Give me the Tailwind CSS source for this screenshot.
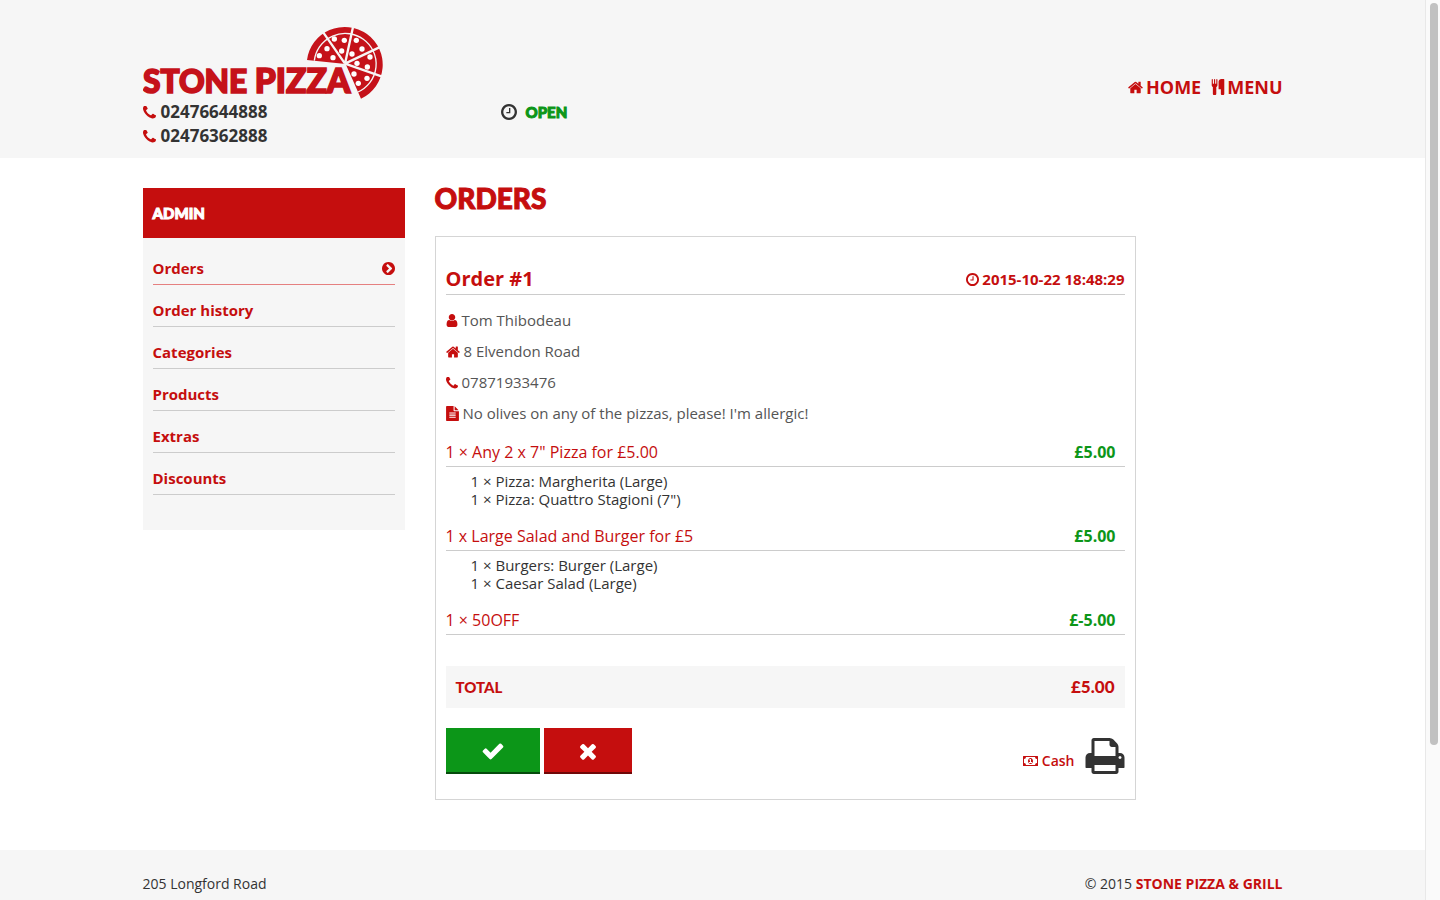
<!DOCTYPE html>
<html lang="en">
<head>
<meta charset="utf-8">
<meta name="viewport" content="width=device-width, initial-scale=1">
<title>Orders - Stone Pizza</title>
<script src="https://cdn.jsdelivr.net/npm/@tailwindcss/browser@4"></script>
</head>
<body class="flex h-screen overflow-hidden bg-white font-['Open_Sans','Noto_Sans',sans-serif] text-[15px] text-[#333]">

<svg class="hidden" aria-hidden="true">
  <symbol id="phone" viewBox="192 192 1408 1408"><path d="M1600 1240q0 27-10 70.5t-21 68.5q-21 50-122 106-94 51-186 51-27 0-53-3.5t-57.5-12.5-47-14.5-55.5-20.5-49-18q-98-35-175-83-127-79-264-216t-216-264q-48-77-83-175-3-9-18-49t-20.5-55.5-14.5-47-12.5-57.5-3.5-53q0-92 51-186 56-101 106-122 25-11 68.5-21t70.5-10q14 0 21 3 18 6 53 76 11 19 30 54t35 63.5 31 53.5q3 4 17.5 25t21.5 35.5 7 28.5q0 20-28.5 50t-62 55-62 53-28.5 46q0 9 5 22.5t8.5 20.5 14 24 11.5 19q76 137 174 235t235 174q2 1 19 11.5t24 14 20.5 8.5 22.5 5q18 0 46-28.5t53-62 55-62 50-28.5q14 0 28.5 7t35.5 21.5 25 17.5q25 15 53.5 31t63.5 35 54 30q70 35 76 53 3 7 3 21z"/></symbol>
  <symbol id="home" viewBox="64 64 1664 1664"><path d="M1472 992v480q0 26-19 45t-45 19h-384v-384h-256v384h-384q-26 0-45-19t-19-45v-480q0-1 .5-3t.5-3l575-474 575 474q1 2 1 6zm223-69l-62 74q-8 9-21 11h-3q-13 0-21-7l-692-577-692 577q-12 8-24 7-13-2-21-11l-62-74q-8-10-7-23.500t11-21.500l719-599q32-26 76-26t76 26l244 204v-195q0-14 9-23t23-9h192q14 0 23 9t9 23v408l219 182q10 8 11 21.500t-7 23.500z"/></symbol>
  <symbol id="clock" viewBox="128 128 1536 1536"><path d="M1024 544v448q0 14-9 23t-23 9h-320q-14 0-23-9t-9-23v-64q0-14 9-23t23-9h224v-352q0-14 9-23t23-9h64q14 0 23 9t9 23zm416 352q0-148-73-273t-198-198-273-73-273 73-198 198-73 273 73 273 198 198 273 73 273-73 198-198 73-273zm224 0q0 209-103 385.5t-279.5 279.500-385.500 103-385.500-103-279.500-279.500-103-385.500 103-385.500 279.500-279.500 385.500-103 385.500 103 279.500 279.500 103 385.500z"/></symbol>
  <symbol id="cutlery" viewBox="192 0 1408 1792"><path d="M832 64v640q0 61-35.5 111t-92.5 70v779q0 52-38 90t-90 38h-128q-52 0-90-38t-38-90v-779q-57-20-92.5-70t-35.5-111v-640q0-26 19-45t45-19 45 19 19 45v416q0 26 19 45t45 19 45-19 19-45v-416q0-26 19-45t45-19 45 19 19 45v416q0 26 19 45t45 19 45-19 19-45v-416q0-26 19-45t45-19 45 19 19 45zm768 0v1600q0 52-38 90t-90 38h-128q-52 0-90-38t-38-90v-512h-224q-13 0-22.5-9.5t-9.5-22.5v-800q0-132 94-226t226-94h256q26 0 45 19t19 45z"/></symbol>
  <symbol id="arrow" viewBox="128 128 1536 1536"><path d="M845 1395l454-454q19-19 19-45t-19-45l-454-454q-19-19-45-19t-45 19l-102 102q-19 19-19 45t19 45l307 307-307 307q-19 19-19 45t19 45l102 102q19 19 45 19t45-19zm819-499q0 209-103 385.500t-279.500 279.500-385.500 103-385.500-103-279.500-279.500-103-385.500 103-385.500 279.500-279.500 385.500-103 385.500 103 279.500 279.500 103 385.500z" fill-rule="evenodd"/></symbol>
  <symbol id="user" viewBox="256 128 1280 1536"><path d="M1536 1399q0 109-62.500 187t-150.500 78h-854q-88 0-150.500-78t-62.500-187q0-85 8.500-160.500t31.500-152 58.500-131 94-89 134.500-34.500q131 128 313 128t313-128q76 0 134.500 34.500t94 89 58.500 131 31.500 152 8.500 160.500zm-256-887q0 159-112.500 271.500t-271.500 112.500-271.500-112.500-112.500-271.500 112.500-271.500 271.500-112.500 271.500 112.500 112.500 271.500z"/></symbol>
  <symbol id="note" viewBox="128 0 1536 1792"><path d="M1596 476q14 14 28 36h-472v-472q22 14 36 28zm-476 164h544v1056q0 40-28 68t-68 28h-1344q-40 0-68-28t-28-68v-1600q0-40 28-68t68-28h800v544q0 40 28 68t68 28zm160 736v-64q0-14-9-23t-23-9h-704q-14 0-23 9t-9 23v64q0 14 9 23t23 9h704q14 0 23-9t9-23zm0-256v-64q0-14-9-23t-23-9h-704q-14 0-23 9t-9 23v64q0 14 9 23t23 9h704q14 0 23-9t9-23zm0-256v-64q0-14-9-23t-23-9h-704q-14 0-23 9t-9 23v64q0 14 9 23t23 9h704q14 0 23-9t9-23z" fill-rule="evenodd"/></symbol>
  <symbol id="check" viewBox="0 0 1792 1792"><path d="M1671 566q0 40-28 68l-724 724-136 136q-28 28-68 28t-68-28l-136-136-362-362q-28-28-28-68t28-68l136-136q28-28 68-28t68 28l294 295 656-657q28-28 68-28t68 28l136 136q28 28 28 68z"/></symbol>
  <symbol id="times" viewBox="0 0 1792 1792"><path d="M1490 1322q0 40-28 68l-136 136q-28 28-68 28t-68-28l-294-294-294 294q-28 28-68 28t-68-28l-136-136q-28-28-28-68t28-68l294-294-294-294q-28-28-28-68t28-68l136-136q28-28 68-28t68 28l294 294 294-294q28-28 68-28t68 28l136 136q28 28 28 68t-28 68l-294 294 294 294q28 28 28 68z"/></symbol>
  <symbol id="print" viewBox="64 128 1664 1536"><path d="M448 1536h896v-256h-896v256zm0-640h896v-384h-160q-40 0-68-28t-28-68v-160h-640v640zm1152 64q0-26-19-45t-45-19-45 19-19 45 19 45 45 19 45-19 19-45zm128 0v416q0 13-9.500 22.500t-22.500 9.500h-224v160q0 40-28 68t-68 28h-960q-40 0-68-28t-28-68v-160h-224q-13 0-22.500-9.500t-9.500-22.500v-416q0-79 56.500-135.500t135.500-56.500h64v-544q0-40 28-68t68-28h672q40 0 88 20t76 48l152 152q28 28 48 76t20 88v256h64q79 0 135.500 56.500t56.500 135.500z"/></symbol>
  <symbol id="money" viewBox="0 0 30 20"><path fill-rule="evenodd" d="M1 0h28a1 1 0 0 1 1 1v18a1 1 0 0 1-1 1H1a1 1 0 0 1-1-1V1a1 1 0 0 1 1-1zM6 2a4 4 0 0 1-4 4v8a4 4 0 0 1 4 4h18a4 4 0 0 1 4-4V6a4 4 0 0 1-4-4z"/><path fill-rule="evenodd" d="M15 4c3 0 5 3 5 6s-2 6-5 6-5-3-5-6 2-6 5-6zM12 8l1 1 1-.6V12h-2v2h6v-2h-2V6h-2z"/></symbol>
</svg>

<div class="flex min-w-0 flex-1 flex-col">
  <header class="shrink-0 bg-[#f6f6f6]">
    <div class="mx-auto flex h-[158px] max-w-[1140px] justify-between pt-6">
      <div class="flex">
        <div class="w-[358px]">
          <a href="#" class="block" aria-label="Stone Pizza home">
            <svg class="h-[76px] w-[243px] fill-[#c5121a]" viewBox="24 28 729 228">
              <g font-family="Lato, sans-serif" font-weight="900" stroke="#c5121a" stroke-width="5">
                <text x="24" y="236" font-size="95">STONE</text>
                <text x="359" y="236" font-size="101">PIZZA</text>
              </g>
              <path d="M632 134L640 130L700 256L678 256z" fill="#f6f6f6"/>
              <path d="M632 148L516 136A114 113 0 1 1 678 252z"/>
              <path d="M538 138A93 92 0 1 1 669 232" fill="none" stroke="#f6f6f6" stroke-width="4"/>
              <path d="M630 147L563 51M630 147L656 28M630 147L744 93M630 147L750 189" fill="none" stroke="#f6f6f6" stroke-width="7"/>
              <g fill="#fff"><circle cx="553" cy="123" r="8"/><circle cx="576" cy="102" r="8"/><circle cx="594" cy="129" r="8"/><circle cx="598" cy="73" r="8"/><circle cx="628" cy="77" r="8"/><circle cx="620" cy="109" r="8"/><circle cx="664" cy="77" r="8"/><circle cx="681" cy="103" r="8"/><circle cx="651" cy="118" r="8"/><circle cx="705" cy="127" r="8"/><circle cx="697" cy="157" r="8"/><circle cx="666" cy="146" r="8"/><circle cx="657" cy="178" r="8"/><circle cx="696" cy="191" r="8"/><circle cx="670" cy="206" r="8"/></g>
            </svg>
          </a>
          <p class="flex items-center gap-[5px] text-[17px] leading-6 font-bold"><svg class="size-[13px] fill-[#c50e0e]"><use href="#phone"/></svg>02476644888</p>
          <p class="flex items-center gap-[5px] text-[17px] leading-6 font-bold"><svg class="size-[13px] fill-[#c50e0e]"><use href="#phone"/></svg>02476362888</p>
        </div>
        <p class="mt-[76px] flex h-6 items-center gap-[9px] font-['Lato',sans-serif] text-[15px] font-black text-[#0c9618] [-webkit-text-stroke:1px]"><svg class="size-4 fill-[#333]"><use href="#clock"/></svg>OPEN</p>
      </div>
      <nav class="mt-[51px] flex h-6 items-center gap-[10px] text-lg font-bold text-[#c50e0e]">
        <a href="#" class="flex items-center gap-[3px]"><svg class="size-[15px] fill-current"><use href="#home"/></svg>HOME</a>
        <a href="#" class="flex items-center gap-[2px]"><svg class="h-4 w-[14px] fill-current"><use href="#cutlery"/></svg>MENU</a>
      </nav>
    </div>
  </header>

  <div class="mx-auto flex w-full max-w-[1140px] shrink-0 items-start gap-[30px] pt-[30px] pb-[50px]">
    <aside class="w-[262px] shrink-0 bg-[#f6f6f6] pb-[35px] font-bold text-[#c50e0e]">
      <h2 class="h-[50px] bg-[#c50e0e] px-[10px] font-['Lato',sans-serif] text-[15px] leading-[50px] font-black text-white [-webkit-text-stroke:1px]">ADMIN</h2>
      <nav class="flex flex-col px-[10px] pt-[5px]">
        <a href="#" class="flex h-[42px] items-end justify-between border-b border-[#e58080] pb-[5px] leading-[21px]">Orders<svg class="mb-1 size-[13px] fill-current"><use href="#arrow"/></svg></a>
        <a href="#" class="flex h-[42px] items-end border-b border-[#ccc] pb-[5px] leading-[21px]">Order history</a>
        <a href="#" class="flex h-[42px] items-end border-b border-[#ccc] pb-[5px] leading-[21px]">Categories</a>
        <a href="#" class="flex h-[42px] items-end border-b border-[#ccc] pb-[5px] leading-[21px]">Products</a>
        <a href="#" class="flex h-[42px] items-end border-b border-[#ccc] pb-[5px] leading-[21px]">Extras</a>
        <a href="#" class="flex h-[42px] items-end border-b border-[#ccc] pb-[5px] leading-[21px]">Discounts</a>
      </nav>
    </aside>

    <main class="max-w-[701px] flex-1">
      <h1 class="mb-7 font-['Lato',sans-serif] text-[28px] leading-5 font-black text-[#c50e0e] [-webkit-text-stroke:1px]">ORDERS</h1>
      <section class="border border-[#d5d5d5] px-[10px] pt-[26px] pb-[25px]">
        <div class="flex h-8 items-center justify-between border-b border-[#ccc] font-bold text-[#c50e0e]">
          <h2 class="text-xl leading-7">Order #1</h2>
          <p class="flex items-center gap-[3px] pt-[2px]"><svg class="size-[13px] fill-current"><use href="#clock"/></svg>2015-10-22 18:48:29</p>
        </div>
        <ul class="mt-[10px] mb-[9px] leading-[31px] text-[#555]">
          <li class="flex items-center gap-1"><svg class="h-[13px] w-3 fill-[#c50e0e]"><use href="#user"/></svg>Tom Thibodeau</li>
          <li class="flex items-center gap-1"><svg class="size-[14px] fill-[#c50e0e]"><use href="#home"/></svg>8 Elvendon Road</li>
          <li class="flex items-center gap-1"><svg class="size-3 fill-[#c50e0e]"><use href="#phone"/></svg>07871933476</li>
          <li class="flex items-center gap-1"><svg class="h-[15px] w-[13px] fill-[#c50e0e]"><use href="#note"/></svg>No olives on any of the pizzas, please! I'm allergic!</li>
        </ul>

        <div class="flex h-[29px] items-center justify-between border-b border-[#ccc] pr-[9px] text-base"><h3 class="text-[#c50e0e]">1 × Any 2 x 7" Pizza for £5.00</h3><span class="font-bold text-[#0c9618]">£5.00</span></div>
        <ul class="pt-[5px] pb-[14px] pl-[25px] text-[15px] leading-[18px]"><li>1 × Pizza: Margherita (Large)</li><li>1 × Pizza: Quattro Stagioni (7")</li></ul>
        <div class="flex h-[29px] items-center justify-between border-b border-[#ccc] pr-[9px] text-base"><h3 class="text-[#c50e0e]">1 x Large Salad and Burger for £5</h3><span class="font-bold text-[#0c9618]">£5.00</span></div>
        <ul class="pt-[5px] pb-[14px] pl-[25px] text-[15px] leading-[18px]"><li>1 × Burgers: Burger (Large)</li><li>1 × Caesar Salad (Large)</li></ul>
        <div class="flex h-[29px] items-center justify-between border-b border-[#ccc] pr-[9px] text-base"><h3 class="text-[#c50e0e]">1 × 50OFF</h3><span class="font-bold text-[#0c9618]">£-5.00</span></div>

        <div class="mt-[31px] flex h-[42px] items-center justify-between bg-[#f6f6f6] px-[10px] font-['Lato',sans-serif] font-black text-[#c50e0e]"><span class="text-[15px]">TOTAL</span><span class="text-[17px]">£5.00</span></div>

        <div class="mt-5 flex h-[46px] items-start justify-between">
          <div class="flex gap-1">
            <button type="button" aria-label="Accept order" class="flex h-[46px] w-[94px] items-center justify-center border-b-2 border-[#064b0c] bg-[#0c9618] pt-[2px]"><svg class="size-6 fill-white"><use href="#check"/></svg></button>
            <button type="button" aria-label="Reject order" class="flex h-[46px] w-[88px] items-center justify-center border-b-2 border-[#700808] bg-[#c50e0e] pt-[2px]"><svg class="size-6 fill-white"><use href="#times"/></svg></button>
          </div>
          <div class="flex items-end gap-[10px] self-end">
            <p class="flex items-center gap-1 pb-[3px] text-sm font-semibold text-[#c50e0e]"><svg class="h-[10px] w-[15px] fill-current"><use href="#money"/></svg>Cash</p>
            <button type="button" aria-label="Print order"><svg class="h-9 w-10 fill-[#333]"><use href="#print"/></svg></button>
          </div>
        </div>
      </section>
    </main>
  </div>

  <footer class="flex-1 shrink-0 bg-[#f6f6f6]">
    <div class="mx-auto flex max-w-[1140px] justify-between pt-6 text-sm leading-5">
      <p>205 Longford Road</p>
      <p>© 2015 <a href="#" class="font-bold text-[#c50e0e]">STONE PIZZA &amp; GRILL</a></p>
    </div>
  </footer>
</div>

<div class="w-[15px] shrink-0 border-l border-[#e8e8e8] bg-[#fafafa] pt-[3px] pl-1" aria-hidden="true">
  <div class="h-[742px] w-2 rounded-full bg-[#c1c1c1]"></div>
</div>
</body>
</html>
